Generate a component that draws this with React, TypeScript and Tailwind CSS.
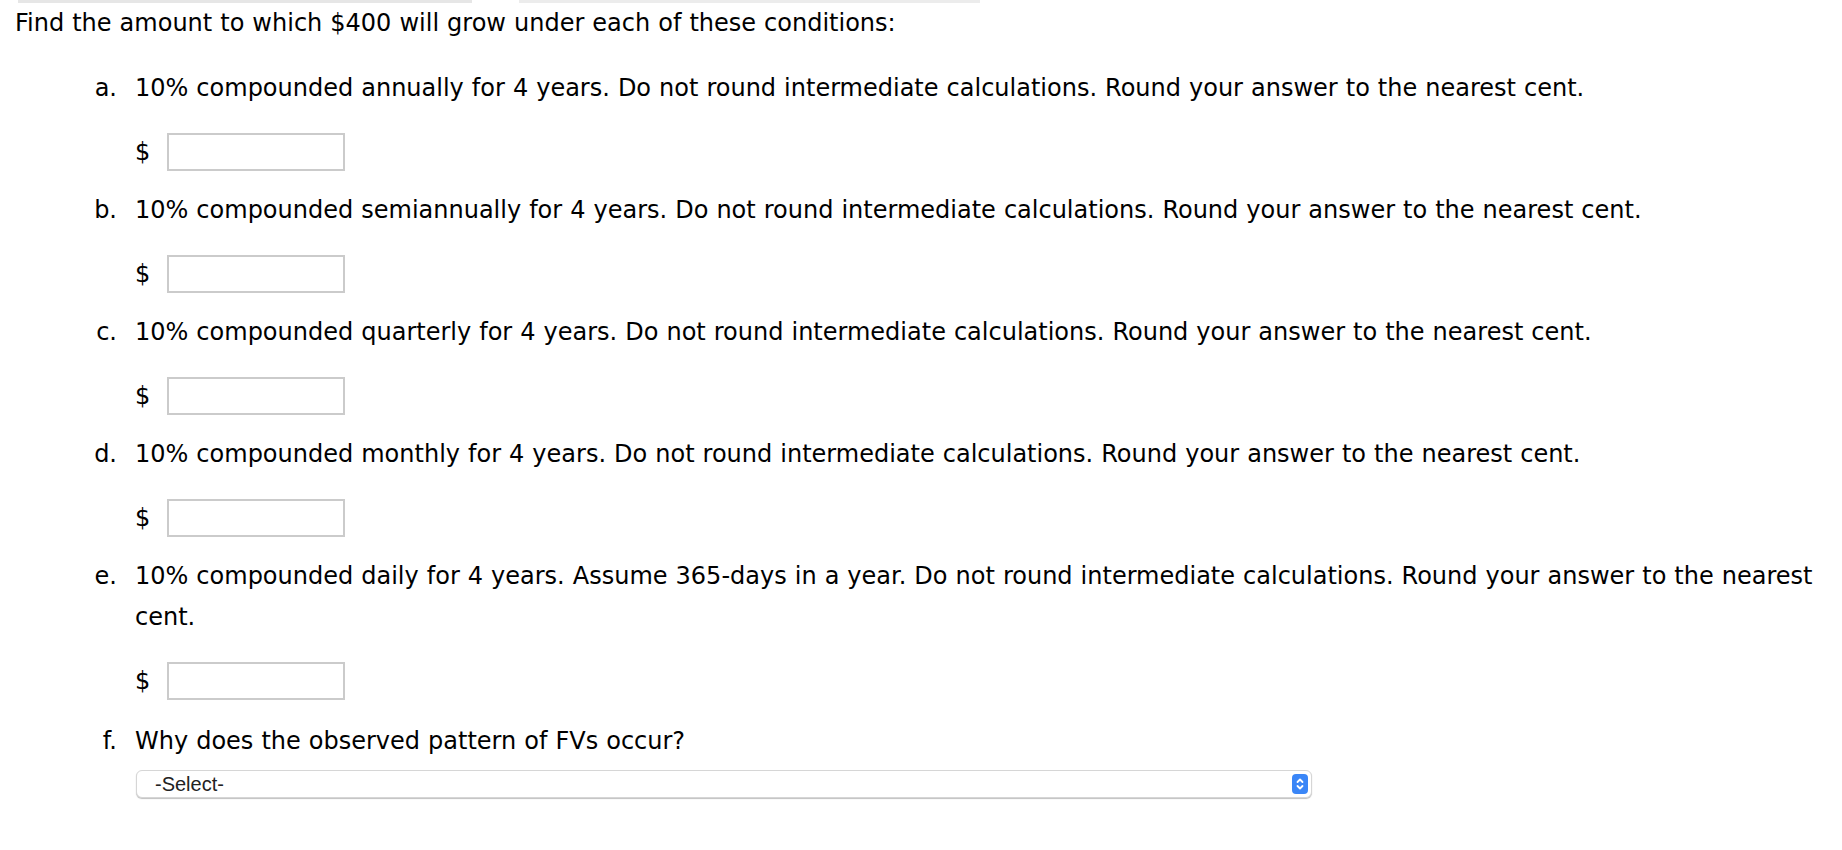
const questions = [
  {
    key: "a",
    text: "10% compounded annually for 4 years. Do not round intermediate calculations. Round your answer to the nearest cent.",
  },
  {
    key: "b",
    text: "10% compounded semiannually for 4 years. Do not round intermediate calculations. Round your answer to the nearest cent.",
  },
  {
    key: "c",
    text: "10% compounded quarterly for 4 years. Do not round intermediate calculations. Round your answer to the nearest cent.",
  },
  {
    key: "d",
    text: "10% compounded monthly for 4 years. Do not round intermediate calculations. Round your answer to the nearest cent.",
  },
  {
    key: "e",
    text: "10% compounded daily for 4 years. Assume 365-days in a year. Do not round intermediate calculations. Round your answer to the nearest cent.",
  },
];

function AnswerRow() {
  return (
    <div className="flex items-center h-[38px] mt-[24px] pl-[135px]">
      <span className="w-[32px]">$</span>
      <input
        type="text"
        className="w-[178px] h-[38px] border-2 border-[#cbcbcb] bg-white outline-none px-2"
      />
    </div>
  );
}

export default function App() {
  return (
    <div
      className="w-[1842px] min-h-[850px] bg-white text-black text-[24px] leading-[41px] [word-spacing:0.4px]"
      style={{ fontFamily: '"DejaVu Sans", Verdana, sans-serif' }}
    >
      {/* cropped bits of the toolbar above */}
      <div className="flex h-[3px]">
        <div className="ml-[18px] w-[454px] bg-[#e6e6e6]" />
        <div className="ml-[47px] w-[461px] bg-[#ececec]" />
      </div>

      <p className="pl-[15px]">Find the amount to which $400 will grow under each of these conditions:</p>

      <div className="mt-[24px]">
        {questions.map((q, i) => (
          <div key={q.key} className={i > 0 ? "mt-[19px]" : ""}>
            <div className="flex">
              <span className="w-[117px] shrink-0 text-right">{q.key}.</span>
              <p className="pl-[18px]">{q.text}</p>
            </div>
            <AnswerRow />
          </div>
        ))}

        <div className="mt-[21px]">
          <div className="flex">
            <span className="w-[117px] shrink-0 text-right">f.</span>
            <p className="pl-[18px]">Why does the observed pattern of FVs occur?</p>
          </div>
          <div className="ml-[136px] mt-[8px] w-[1176px] h-[28px] rounded-[6px] border border-[#d6d6d6] shadow-[0_1px_1px_rgba(0,0,0,0.25)] bg-white flex items-center justify-between pl-[18px] pr-[3px]">
            <span
              className="text-[20px] leading-none text-[#222] [word-spacing:0px]"
              style={{ fontFamily: '"Liberation Sans", Arial, sans-serif' }}
            >
              -Select-
            </span>
            <div className="w-[16px] h-[20px] rounded-[4px] bg-[#3a86f7] flex items-center justify-center">
              <svg width="10" height="14" viewBox="0 0 10 14" fill="none" stroke="white" strokeWidth="1.8" strokeLinecap="round" strokeLinejoin="round">
                <path d="M2.5 5 L5 2.5 L7.5 5" />
                <path d="M2.5 9 L5 11.5 L7.5 9" />
              </svg>
            </div>
          </div>
        </div>
      </div>
    </div>
  );
}
